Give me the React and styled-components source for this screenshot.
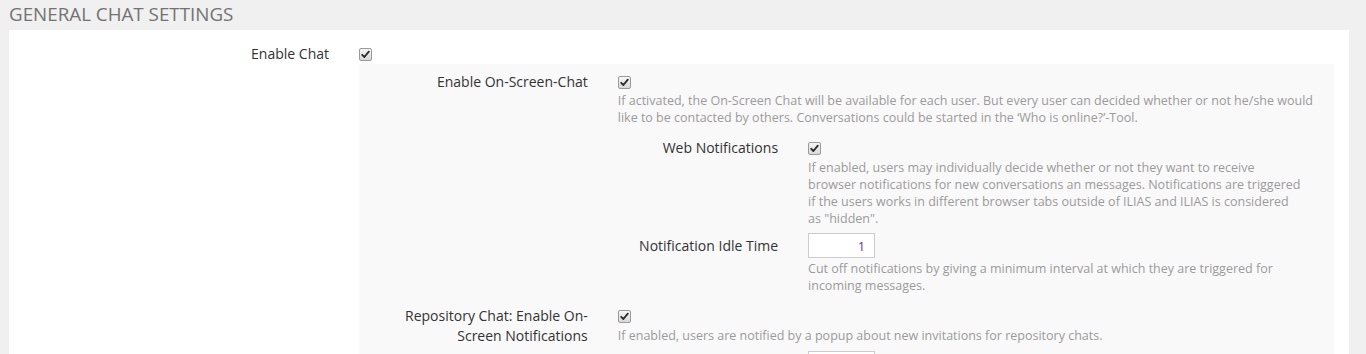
import React from "react";
import styled, { createGlobalStyle } from "styled-components";

const Global = createGlobalStyle`
  html, body { margin: 0; padding: 0; background: #f0f0f0; }
  body { font-family: "Open Sans", "Noto Sans", sans-serif; color: #333; }
  * { box-sizing: border-box; }
`;

const Page = styled.div`
  padding: 0 17px 0 9px;
`;

const Header = styled.h2`
  margin: 0;
  height: 30px;
  padding-top: 1px;
  font-size: 18.8px;
  line-height: 26px;
  font-weight: 400;
  color: #737373;
  text-transform: uppercase;
`;

const Panel = styled.div`
  background: #ffffff;
  padding-top: 8px;
  padding-bottom: 20px;
`;

const Row = styled.div`
  display: grid;
  grid-template-columns: 25% 75%;
  padding-top: 6px;
`;

const Label = styled.div`
  padding: ${(p) => p.$pt || 0}px 15px 0;
  text-align: right;
  font-size: 14px;
  line-height: 20px;
  color: #333;
`;

const Field = styled.div`
  padding: 0 15px;
  min-width: 0;
`;

const CheckLine = styled.div`
  height: 20px;
  display: flex;
  align-items: center;
`;

const Box = styled.span`
  display: inline-flex;
  align-items: center;
  justify-content: center;
  width: 13px;
  height: 13px;
  border: 1px solid #9a9a9a;
  border-radius: 2px;
  background: linear-gradient(#f6f6f6, #d8d8d8);
  svg { display: block; }
`;

const Help = styled.div`
  margin-top: ${(p) => p.$mt ?? 0}px;
  font-size: 12.5px;
  line-height: 17px;
  color: #9b9b9b;
`;

const NumberInput = styled.input`
  display: block;
  width: 67px;
  height: 25px;
  border: 1px solid #cccccc;
  background: #fff;
  text-align: right;
  padding: 0 9px;
  font-family: "Open Sans", sans-serif;
  font-size: 13px;
  color: #6a3a82;
  outline: none;
`;

const SubForm = styled.div`
  background: #f9f9f9;
  margin-top: ${(p) => p.$mt || 0}px;
  padding-top: ${(p) => p.$pt || 0}px;
  padding-bottom: ${(p) => p.$pb || 0}px;
`;

const Checkbox = () => (
  <Box>
    <svg width="9" height="9" viewBox="0 0 9 9">
      <path d="M1.2 4.8 L3.4 7 L7.8 1.6" fill="none" stroke="#2a2a2a" strokeWidth="1.8" strokeLinecap="round" strokeLinejoin="round" />
    </svg>
  </Box>
);

export default function App() {
  return (
    <Page>
      <Global />
      <Header>General Chat Settings</Header>
      <Panel>
        <Row>
          <Label>Enable Chat</Label>
          <Field>
            <CheckLine><Checkbox /></CheckLine>
            <SubForm $mt={0} $pt={2} $pb={10}>
              <Row>
                <Label>Enable On-Screen-Chat</Label>
                <Field>
                  <CheckLine><Checkbox /></CheckLine>
                  <Help>
                    If activated, the On-Screen Chat will be available for each user. But every user can decided whether or not he/she would like to be contacted by others. Conversations could be started in the ‘Who is online?’-Tool.
                  </Help>
                  <SubForm $pt={6} $pb={6}>
                    <Row>
                      <Label>Web Notifications</Label>
                      <Field>
                        <CheckLine><Checkbox /></CheckLine>
                        <Help $mt={1}>
                          If enabled, users may individually decide whether or not they want to receive browser notifications for new conversations an messages. Notifications are triggered if the users works in different browser tabs outside of ILIAS and ILIAS is considered as "hidden".
                        </Help>
                      </Field>
                    </Row>
                    <Row>
                      <Label $pt={3}>Notification Idle Time</Label>
                      <Field>
                        <NumberInput defaultValue="1" />
                        <Help $mt={2}>
                          Cut off notifications by giving a minimum interval at which they are triggered for incoming messages.
                        </Help>
                      </Field>
                    </Row>
                  </SubForm>
                </Field>
              </Row>
              <Row>
                <Label>Repository Chat: Enable On-Screen Notifications</Label>
                <Field>
                  <CheckLine><Checkbox /></CheckLine>
                  <Help $mt={1}>
                    If enabled, users are notified by a popup about new invitations for repository chats.
                  </Help>
                  <SubForm $pt={1} $pb={6}>
                    <Row>
                      <Label $pt={3}></Label>
                      <Field>
                        <NumberInput defaultValue="5" />
                      </Field>
                    </Row>
                  </SubForm>
                </Field>
              </Row>
            </SubForm>
          </Field>
        </Row>
      </Panel>
    </Page>
  );
}
